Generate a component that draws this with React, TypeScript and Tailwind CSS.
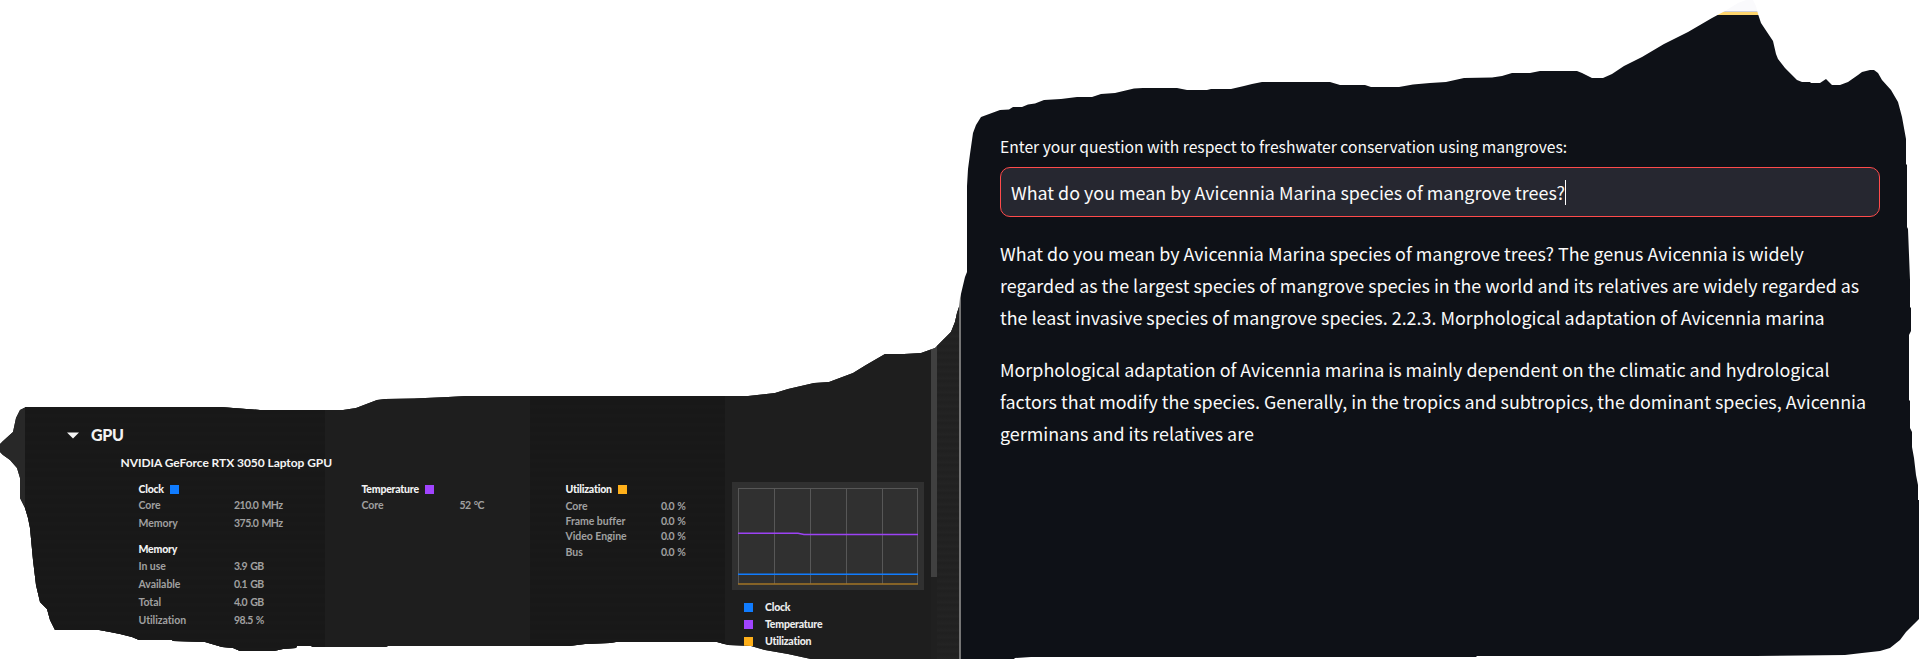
import type { ReactNode } from "react";

type Stat = { label: string; value: string };

const clocks: Stat[] = [
  { label: "Core", value: "210.0 MHz" },
  { label: "Memory", value: "375.0 MHz" },
];
const memory: Stat[] = [
  { label: "In use", value: "3.9 GB" },
  { label: "Available", value: "0.1 GB" },
  { label: "Total", value: "4.0 GB" },
  { label: "Utilization", value: "98.5 %" },
];

function Heading({ children, swatch }: { children: ReactNode; swatch?: string }) {
  return (
    <div className="flex h-4 items-center gap-1.5 whitespace-nowrap text-[10.5px] font-black tracking-[-0.22px] text-[#f2f2f2]">
      <span className="pt-px">{children}</span>
      {swatch && <span className={`h-[9px] w-[9px] ${swatch}`} />}
    </div>
  );
}

function Row({ stat, height, labelWidth }: { stat: Stat; height: string; labelWidth: string }) {
  return (
    <div className={`flex items-center whitespace-nowrap text-[10.5px] font-bold text-[#a0a0a0] ${height}`}>
      <span className={`shrink-0 tracking-[-0.05px] ${labelWidth}`}>{stat.label}</span>
      <span className="tracking-[-0.5px] [word-spacing:1px]">{stat.value}</span>
    </div>
  );
}

function Chart() {
  return (
    <svg width="192" height="108" viewBox="0 0 192 108" className="block bg-[#303030]">
      <path
        d="M6.5 6V102M42.5 6V102M78.5 6V102M114.5 6V102M150.5 6V102M185.5 6V102M6 6.5H186"
        stroke="#575757"
        fill="none"
      />
      <path d="M6 51.2H66L72 52.4H186" stroke="#9c42f5" strokeWidth="1.5" fill="none" />
      <path d="M6 92.3H186" stroke="#107cff" strokeWidth="1.5" />
      <path d="M6 102H186" stroke="#a37424" strokeWidth="1.7" />
    </svg>
  );
}

function Legend({ color, children }: { color: string; children: ReactNode }) {
  return (
    <div className="flex h-[17px] items-center gap-3 text-[10.5px] font-black tracking-[-0.22px] text-[#ededed]">
      <span className={`h-[9px] w-[9px] ${color}`} />
      <span className="pt-px">{children}</span>
    </div>
  );
}

function GpuMonitor() {
  return (
    <section className="flex w-[959px] shrink-0 bg-[#202020] font-['Lato',sans-serif]">
      <div className="w-[25px] shrink-0 bg-[#282828]" />
      <div className="relative z-10 w-[300px] shrink-0 bg-[#181818] bg-[repeating-linear-gradient(180deg,#191919_0px,#191919_3px,#181818_4px,#181818_9px)] pt-[423px]">
        <div className="flex h-6 items-center pl-[42px]">
          <svg width="12" height="7" viewBox="0 0 12 7" className="block">
            <path d="M0 0.5H12L6 6.5Z" fill="#f5f5f5" />
          </svg>
          <span className="ml-3 text-[16px] font-black tracking-[-0.3px] text-[#f2f2f2]">GPU</span>
        </div>
        <div className="mt-[7px] flex h-[18px] items-center pl-[95.5px]">
          <span className="whitespace-nowrap text-[12px] font-bold tracking-[-0.06px] text-[#f4f4f4]">
            NVIDIA GeForce RTX 3050 Laptop GPU
          </span>
        </div>
        <div className="pl-[113.5px] pt-[9px]">
          <Heading swatch="bg-[#107cff]">Clock</Heading>
          {clocks.map((s) => (
            <Row key={s.label} stat={s} height="h-[18px]" labelWidth="w-[95.5px]" />
          ))}
          <div className="h-[8px]" />
          <Heading>Memory</Heading>
          <div className="h-px" />
          {memory.map((s) => (
            <Row key={s.label} stat={s} height="h-[18px]" labelWidth="w-[95.5px]" />
          ))}
        </div>
      </div>
      <div className="w-[205px] shrink-0 bg-[#1e1e1e] pl-[36.5px] pt-[481px]">
        <Heading swatch="bg-[#a144ff]">Temperature</Heading>
        <Row stat={{ label: "Core", value: "52 °C" }} height="h-[18px]" labelWidth="w-[98px]" />
      </div>
      <div className="w-[195px] shrink-0 bg-[#181818] bg-[repeating-linear-gradient(180deg,#191919_0px,#191919_3px,#181818_4px,#181818_9px)] pl-[35.5px] pt-[481px]">
        <Heading swatch="bg-[#ffb01a]">Utilization</Heading>
        <div className="h-0.5" />
        {["Core", "Frame buffer", "Video Engine", "Bus"].map((label) => (
          <Row key={label} stat={{ label, value: "0.0 %" }} height="h-[15.3px]" labelWidth="w-[95.5px]" />
        ))}
      </div>
      <div className="w-[206px] shrink-0 bg-[#1e1e1e] pl-[7px] pt-[482px]">
        <Chart />
        <div className="pl-3 pt-[9px]">
          <Legend color="bg-[#107cff]">Clock</Legend>
          <Legend color="bg-[#a144ff]">Temperature</Legend>
          <Legend color="bg-[#ffb01a]">Utilization</Legend>
        </div>
      </div>
      <div className="w-1.5 shrink-0">
        <div className="h-[577px] bg-[#404040]" />
      </div>
      <div className="flex-1 bg-[#222222] bg-[repeating-linear-gradient(180deg,#242424_0px,#202020_3px,#232323_7px)]" />
    </section>
  );
}

function Answer({ lines }: { lines: string[] }) {
  return (
    <p className="mb-5 whitespace-nowrap text-[17.9px] leading-8">
      {lines.map((line) => (
        <span key={line} className="block">
          {line}
        </span>
      ))}
    </p>
  );
}

function QuestionPage() {
  return (
    <section className="flex flex-1 flex-col border-l-2 border-[#757575] font-['Noto_Sans_CJK_SC',sans-serif] text-[#fafafa]">
      <div className="h-[11px] shrink-0 bg-[#fafafc]" />
      <div className="h-px shrink-0 bg-[#cfcfd8]" />
      <div className="h-[3px] shrink-0 bg-[#ffd66e]" />
      <div className="flex-1 bg-[#0e1117] pl-[39px] pt-[119px]">
        <div className="flex h-[26px] items-center whitespace-nowrap text-[15.67px]">
          Enter your question with respect to freshwater conservation using mangroves:
        </div>
        <div className="mt-[7px] flex h-[50px] w-[880px] items-center rounded-[10px] border border-[#ff4b4b] bg-[#262730] pl-2.5">
          <span className="whitespace-nowrap text-[17.9px] leading-6">
            What do you mean by Avicennia Marina species of mangrove trees?
          </span>
          <span className="h-[25px] w-px bg-white" />
        </div>
        <div className="pt-5">
          <Answer
            lines={[
              "What do you mean by Avicennia Marina species of mangrove trees? The genus Avicennia is widely",
              "regarded as the largest species of mangrove species in the world and its relatives are widely regarded as",
              "the least invasive species of mangrove species. 2.2.3. Morphological adaptation of Avicennia marina",
            ]}
          />
          <Answer
            lines={[
              "Morphological adaptation of Avicennia marina is mainly dependent on the climatic and hydrological",
              "factors that modify the species. Generally, in the tropics and subtropics, the dominant species, Avicennia",
              "germinans and its relatives are",
            ]}
          />
        </div>
      </div>
    </section>
  );
}

export default function App() {
  return (
    <div className="h-[659px] w-[1919px] overflow-hidden bg-white">
      <main className="flex h-full w-full [clip-path:path('M0,444L3,441L13,432L16,418L20,410L26,407L220,407L260,410L343,410L356,408L377,400L385,399L414,398.5L448,397L466,396L748,396L775,393L788,389L814,383L829,382L853,373L866,365L885,354L904,354L921,353L935,348L944,339L951,332L955,322L957,313L959,307L960,298L965,277L967,272L967,186L968,169L970,154L973,133L976,125L981,117L1000,110L1009,109.5L1013,107L1022,107L1028,104.5L1035,103.5L1044,100L1061,99L1077,97L1092,97L1101,94L1115,93L1134,88.5L1143,88L1177,88L1187,90L1207,90L1211,89L1231,89L1244,86L1252,84L1262,82L1330,82L1340,85L1365,85L1371,87L1399,87L1413,84.5L1430,83L1446,82L1464,78L1492,77.5L1502,76L1512,73L1530,73L1540,71L1577,71L1582,73L1592,78L1603,78L1612,74L1624,66L1642,57L1664,44L1688,32L1712,18L1725,11L1738,3L1746,0L1753,0L1756,6L1758,14L1761,23L1773,41L1776,54L1778,59L1785,68L1797,80L1802,82L1810,82L1811,83L1820,83L1826,79L1832,85L1840,85L1848,82L1858,75L1862,72L1870,70L1874,70L1878,73L1882,80L1891,90L1898,102L1902,117L1906,139L1906,164L1907,165L1907,227L1908,229L1910,280L1910,307L1911,308L1911,331L1909,335L1909,400L1910,401L1910,428L1912,432L1912,447L1914,458L1916,475L1918,485L1918,500L1919,500L1919,619L1914,624L1906,632L1900,640L1890,648L1880,651L1862,653L1845,655L1755,656L1477,656L1476,657L1031,657L1015,658L1014,659L811,659L788,654L765,650L751,646L728,645L717,642L616,642L610,643L585,644L569,646L388,646L386,647L313,647L311,646L297,646L296,648L283,649L274,651L240,651L233,648L222,647L205,642L173,641L172,640L139,640L132,637L120,634L110,632L99,630L55,630L50,620L47,609L40,602L36,585L33,560L30,528L28,518L25,508L20,498L20,478L17,468L10,460L3,455L0,452Z')]">
        <GpuMonitor />
        <QuestionPage />
      </main>
    </div>
  );
}
